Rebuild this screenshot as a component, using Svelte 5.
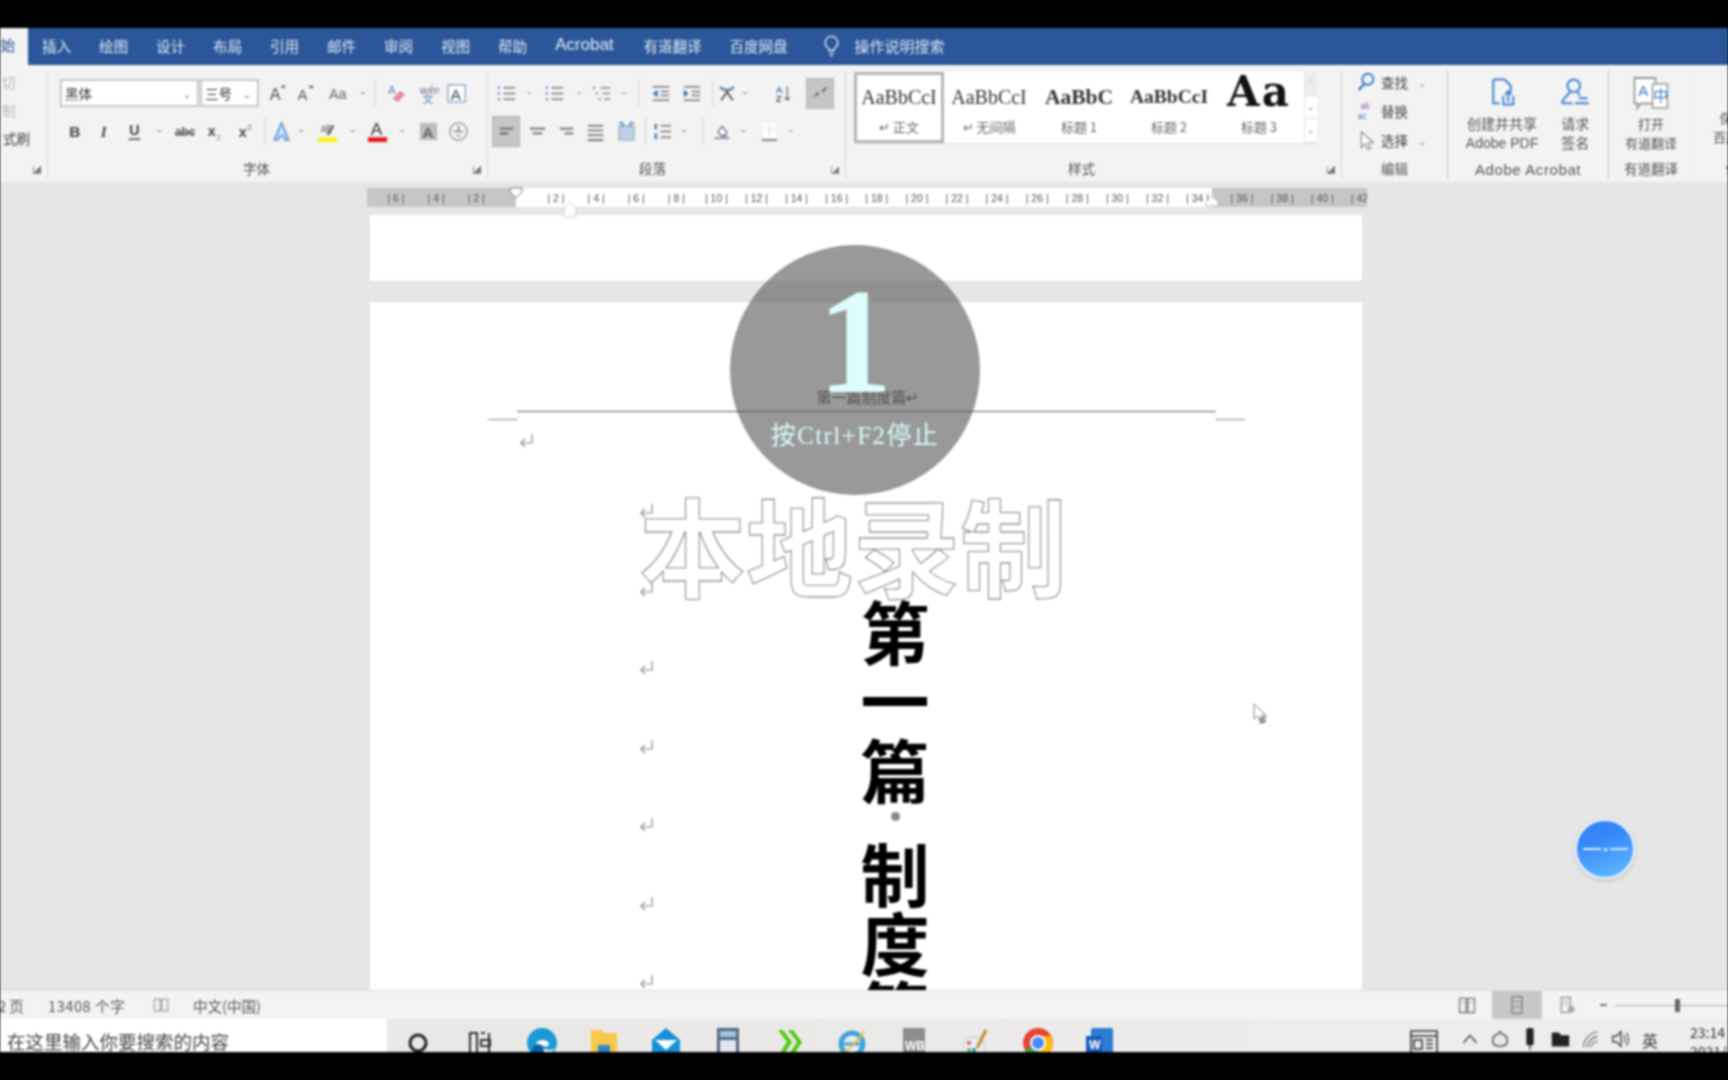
<script>
const tabs = ['插入', '绘图', '设计', '布局', '引用', '邮件', '审阅', '视图', '帮助', 'Acrobat', '有道翻译', '百度网盘'];

const paths = {
  chev: '<path d="M9 10.5l3 3 3-3" fill="none" stroke="#777" stroke-width="1.5"/>',
  grow: '<text x="5" y="19" font-size="17" font-family="Liberation Sans" fill="#555">A</text><path d="M17 6l2-2 2 2" fill="none" stroke="#444" stroke-width="1.4"/>',
  shrink: '<text x="5" y="19" font-size="15" font-family="Liberation Sans" fill="#555">A</text><path d="M17 4l2 2 2-2" fill="none" stroke="#444" stroke-width="1.4"/>',
  case: '<text x="3" y="18" font-size="15" font-family="Liberation Sans" fill="#666">Aa</text>',
  eraser: '<text x="3" y="13" font-size="12" font-family="Liberation Sans" fill="#5a86c0">A</text><path d="M8 17l8-8 5 4-8 8z" fill="#e58b9c"/>',
  wen: '<text x="4" y="13" font-size="11" font-family="Noto Sans CJK SC" fill="#667">wén</text><text x="7" y="22" font-size="11" font-family="Noto Sans CJK SC" fill="#3a76b8">文</text>',
  abox: '<rect x="3" y="3" width="18" height="18" fill="#fff" stroke="#7fa3cc" stroke-width="1.4"/><text x="6" y="19" font-size="16" font-family="Liberation Sans" fill="#444">A</text>',
  bold: '<text x="6.5" y="18" font-size="16" font-weight="700" font-family="Liberation Sans" fill="#444">B</text>',
  ital: '<text x="8" y="18" font-size="16" font-style="italic" font-weight="700" font-family="Liberation Serif" fill="#444">I</text>',
  under: '<text x="6.5" y="16" font-size="15" font-weight="700" font-family="Liberation Sans" fill="#444">U</text><path d="M6 20h12" stroke="#444" stroke-width="1.6"/>',
  abc: '<text x="2" y="17" font-size="12.5" font-weight="700" font-family="Liberation Sans" fill="#555">abc</text><path d="M2 13.5h20" stroke="#555" stroke-width="1.2"/>',
  sub: '<text x="5" y="17" font-size="15" font-weight="700" font-family="Liberation Sans" fill="#444">x</text><text x="14" y="21" font-size="8" font-family="Liberation Sans" fill="#5a86c0">2</text>',
  sup: '<text x="5" y="18" font-size="15" font-weight="700" font-family="Liberation Sans" fill="#444">x</text><text x="14" y="10" font-size="8" font-family="Liberation Sans" fill="#555">2</text>',
  effect: '<path d="M12 3l7.5 18h-4l-1.4-4H9.9l-1.4 4h-4z" fill="#cfe2f6" stroke="#4b8fd6" stroke-width="1.5"/>',
  marker: '<text x="5" y="13" font-size="11" font-family="Liberation Sans" fill="#555">ab</text><path d="M11 15l6-10 2 1-5 10z" fill="#666"/><rect x="2" y="18" width="20" height="5" fill="#ffef1e"/>',
  red: '<text x="5" y="16" font-size="18" font-family="Liberation Sans" fill="#333">A</text><rect x="2" y="18" width="20" height="5" fill="#e8141c"/>',
  ashade: '<rect x="3" y="3" width="18" height="18" fill="#bdbdbd"/><text x="6" y="19" font-size="16" font-family="Liberation Sans" fill="#444">A</text>',
  circ: '<circle cx="12" cy="12" r="9" fill="none" stroke="#888" stroke-width="1.2"/><path d="M7 12h10M12 6v6" stroke="#666" stroke-width="1.3"/><path d="M9.5 15l2.5 2 2.5-2" fill="none" stroke="#666"/>',
  bullets: '<path d="M9 6h12M9 12h12M9 18h12" stroke="#777" stroke-width="1.5"/><path d="M4 5v2M4 11v2M4 17v2" stroke="#3a76b8" stroke-width="2"/>',
  multi: '<path d="M11 6h10M13 12h8M15 18h6" stroke="#888" stroke-width="1.4"/><path d="M4 5v2M7 11v2M10 17v2" stroke="#3a76b8" stroke-width="1.8"/>',
  outdent: '<path d="M4 5h17M12 10h9M12 14h9M4 19h17" stroke="#777" stroke-width="1.6"/><path d="M9 8v8l-5-4z" fill="#2f6fb2"/>',
  indent: '<path d="M4 5h17M12 10h9M12 14h9M4 19h17" stroke="#777" stroke-width="1.6"/><path d="M4 8v8l5-4z" fill="#2f6fb2"/>',
  cross: '<path d="M5 20L15 6M19 20L9 6" stroke="#555" stroke-width="2.2"/><path d="M4 4l4 4M20 4l-4 4" stroke="#3a76b8" stroke-width="2.6"/>',
  sort: '<text x="5" y="11" font-size="10" font-weight="700" font-family="Liberation Sans" fill="#3a76b8">A</text><text x="5" y="21" font-size="10" font-weight="700" font-family="Liberation Sans" fill="#555">Z</text><path d="M17 5v14M14 16l3 3 3-3" fill="none" stroke="#666" stroke-width="1.3"/>',
  marks: '<path d="M7 14l3-3M14 10l3-3" stroke="#555" stroke-width="2"/><path d="M4 15h3M16 6h4" stroke="#777"/>',
  left: '<path d="M5 9h14M5 14h9" stroke="#666" stroke-width="2"/>',
  center: '<path d="M4 9h16M7 14h10" stroke="#666" stroke-width="1.8"/>',
  right: '<path d="M5 9h14M10 14h9" stroke="#666" stroke-width="1.8"/>',
  just: '<path d="M4 6h16M4 11h16M4 16h16M4 21h16" stroke="#666" stroke-width="1.6"/>',
  dist: '<rect x="4" y="6" width="16" height="15" fill="#bcd0e6" stroke="#8aa" /><path d="M4 3h4v4M20 3h-4v4" stroke="#3a76b8" stroke-width="1.5" fill="none"/>',
  spacing: '<path d="M10 6h11M10 12h11M10 18h11" stroke="#777" stroke-width="1.5"/><path d="M5 4v6M5 14v6" stroke="#2f6fb2" stroke-width="2.2"/>',
  fill: '<path d="M7 13l5-7 6 7-5 5z" fill="#fff" stroke="#666" stroke-width="1.4"/><path d="M3 20h18" stroke="#888" stroke-width="2"/><path d="M10 17h8" stroke="#3a76b8" stroke-width="1.6"/>',
  border: '<rect x="5" y="3" width="14" height="15" fill="#fff"/><path d="M12 3v15M5 10h14" stroke="#ddd"/><path d="M4 21h16" stroke="#666" stroke-width="1.6"/>',
  find: '<circle cx="14" cy="9" r="6" fill="none" stroke="#2f78c4" stroke-width="2"/><path d="M10 14l-6 7" stroke="#2f78c4" stroke-width="2.4"/>',
  replace: '<text x="6" y="10" font-size="9" font-family="Liberation Sans" fill="#8b5ca8">ab</text><text x="3" y="21" font-size="9" font-family="Liberation Sans" fill="#3a76b8">ac</text>',
  select: '<path d="M7 3v17l4-4 3 6 3-1-3-6h6z" fill="#fff" stroke="#888" stroke-width="1.3"/>',
  pdf: '<path d="M5 2h9l5 5v5M5 2v19h5" fill="none" stroke="#3f82d6" stroke-width="1.6"/><path d="M13 15v7h8v-7M17 20v-8M14.5 14l2.5-2.5 2.5 2.5" fill="none" stroke="#3f82d6" stroke-width="1.5"/>',
  sign: '<circle cx="11" cy="7" r="5" fill="none" stroke="#3f82d6" stroke-width="1.6"/><path d="M8 12l-6 7v2h8M14 12l2 3" fill="none" stroke="#3f82d6" stroke-width="1.6"/><path d="M12 21h11M15 17h7" stroke="#3f82d6" stroke-width="1.6"/>',
  trans: '<path d="M1 2h14v17H5l-2 3v-3H1z" fill="#fff" stroke="#999" stroke-width="1.2"/><path d="M13 6h10v16H13z" fill="#fff" stroke="#999" stroke-width="1"/><text x="3.5" y="14" font-size="10" font-family="Liberation Sans" fill="#2f78c4">A</text><text x="13.5" y="17" font-size="10" font-family="Noto Sans CJK SC" fill="#2f78c4">中</text>',
  baidu: '<circle cx="16" cy="12" r="10" fill="#3db2e8"/>',
  ret: '<path d="M15 4v9H4M8 9l-4 4 4 4" fill="none" stroke="#888" stroke-width="1.2"/>',
  book: '<path d="M3 4h8v16H3zM13 4h8v16h-8z" fill="none" stroke="#888" stroke-width="1.3"/>',
  read: '<path d="M3 4h8v17H3zM13 4h8v17h-8z" fill="none" stroke="#777" stroke-width="1.6"/><path d="M5 9h4M15 9h4" stroke="#999"/>',
  print: '<rect x="6" y="2" width="12" height="20" fill="none" stroke="#777" stroke-width="1.4"/><path d="M6 8h12M6 14h12" stroke="#777"/>',
  web: '<rect x="5" y="3" width="11" height="18" fill="none" stroke="#888" stroke-width="1.4"/><path d="M7 7h7M7 11h7" stroke="#999"/><circle cx="17" cy="17" r="4" fill="#aaa"/>',
  bulb: '<path d="M12 2.5a6.5 6.5 0 0 0-4 11.6c.8.7 1.2 1.6 1.2 2.9h5.6c0-1.3.4-2.2 1.2-2.9A6.5 6.5 0 0 0 12 2.5zM9.5 20h5M10.5 22.5h3" fill="none" stroke="#e4ecf8" stroke-width="1.4"/>',
  caret: '<path d="M5 16l7-8 7 8" fill="none" stroke="#444" stroke-width="1.6"/>',
  cloud: '<path d="M12 4l3 3c3 1 5 4 5 7 0 4-3 6-8 6s-8-2-8-6c0-3 2-6 5-7z" fill="#e8e8e8" stroke="#444" stroke-width="1.5"/>',
  mic: '<rect x="8" y="0" width="8" height="19" rx="2" fill="#222"/><path d="M12 19v5" stroke="#555" stroke-width="1.6"/>',
  net: '<path d="M3 5h8l2 3h9v12H3z" fill="#222"/><path d="M3 20h19" stroke="#777" stroke-width="1.4"/>',
  wifi: '<path d="M5 21C5 13 11 6 20 4M9 21c0-5 4-10 11-12M13 21c0-3 3-6 7-7" fill="none" stroke="#777" stroke-width="1.5"/>',
  vol: '<path d="M4 9h4l5-5v16l-5-5H4z" fill="none" stroke="#444" stroke-width="1.5"/><path d="M16 8c2 2 2 6 0 8M19 5c3 4 3 10 0 14" fill="none" stroke="#555" stroke-width="1.4"/>'
};

const fontRow1 = [
  { i: 'grow', w: 28 }, { i: 'shrink', w: 29 }, { i: 'case', w: 36 }, { i: 'chev', w: 16 }, { sep: 1, w: 8 },
  { i: 'eraser', w: 34 }, { i: 'wen', w: 28 }, { i: 'abox', w: 30 }
];
const fontRow2 = [
  { i: 'bold', w: 28 }, { i: 'ital', w: 32 }, { i: 'under', w: 28 }, { i: 'chev', w: 22 }, { i: 'abc', w: 28 },
  { i: 'sub', w: 33 }, { i: 'sup', w: 28 }, { sep: 1, w: 10 }, { i: 'effect', w: 24 }, { i: 'chev', w: 16 },
  { i: 'marker', w: 36 }, { i: 'chev', w: 16 }, { i: 'red', w: 33 }, { i: 'chev', w: 16 }, { i: 'ashade', w: 36 }, { i: 'circ', w: 24 }
];
const paraRow1 = [
  { w: 2 }, { i: 'bullets', w: 32 }, { i: 'chev', w: 14 }, { i: 'bullets', w: 36 }, { i: 'chev', w: 14 }, { i: 'multi', w: 31 }, { i: 'chev', w: 14 },
  { sep: 1, w: 14 }, { i: 'outdent', w: 30 }, { i: 'indent', w: 32 }, { sep: 1, w: 10 }, { i: 'cross', w: 20 }, { i: 'chev', w: 16 },
  { w: 14 }, { i: 'sort', w: 30 }, { w: 9 }, { i: 'marks', w: 28, on: 1 }
];
const paraRow2 = [
  { w: 4 }, { i: 'left', w: 28, on: 1 }, { i: 'center', w: 34 }, { i: 'right', w: 24 }, { i: 'just', w: 34 }, { i: 'dist', w: 28 },
  { sep: 1, w: 10 }, { i: 'spacing', w: 24 }, { i: 'chev', w: 20 }, { sep: 1, w: 18 }, { i: 'fill', w: 20 }, { i: 'chev', w: 22 }, { i: 'border', w: 30 }, { i: 'chev', w: 14 }
];

const styles = [
  { s: 'AaBbCcI', l: '↵ 正文', c: 'normal' },
  { s: 'AaBbCcI', l: '↵ 无间隔', c: 'normal' },
  { s: 'AaBbC', l: '标题 1', c: 'h1' },
  { s: 'AaBbCcI', l: '标题 2', c: 'h2' },
  { s: 'Aa', l: '标题 3', c: 'h3' }
];

const edits = [
  { i: 'find', t: '查找', chev: true },
  { i: 'replace', t: '替换' },
  { i: 'select', t: '选择', chev: true }
];

const rulerLeft = [6, 4, 2];
const rulerMid = [2, 4, 6, 8, 10, 12, 14, 16, 18, 20, 22, 24, 26, 28, 30, 32, 34];
const rulerRight = [36, 38, 40, 42];

const returns = [0, 1, 2, 3, 4, 5, 6];
const tray = ['caret', 'cloud', 'mic', 'net', 'wifi', 'vol'];
</script>

{#snippet icon(name, size = 24)}
  <svg width={size} height={size} viewBox="0 0 24 24">{@html paths[name]}</svg>
{/snippet}

{#snippet tools(items)}
  {#each items as t}
    {#if t.sep}
      <span class="cell" style:width="{t.w}px"><i class="vsep"></i></span>
    {:else if t.i}
      <span class="cell" class:on={t.on} style:width="{t.w}px">{@render icon(t.i, t.i === 'chev' ? 16 : 23)}</span>
    {:else}
      <span class="cell" style:width="{t.w}px"></span>
    {/if}
  {/each}
{/snippet}

<div class="app">
  <div class="bar-black top"></div>

  <nav class="tabs">
    <span class="tab-home">始</span>
    {#each tabs as t}<span class="tab" class:latin={t === 'Acrobat'}>{t}</span>{/each}
    <span class="bulb">{@render icon('bulb', 23)}</span>
    <span class="tell">操作说明搜索</span>
  </nav>

  <section class="ribbon">
    <div class="group clip">
      <div class="clip-list">
        <span>切</span><span>制</span><strong>式刷</strong>
      </div>
      <div class="label"><em class="launch"></em></div>
    </div>

    <div class="group font">
      <div class="row">
        <span class="select name">黑体<b>⌄</b></span>
        <span class="select size">三号<b>⌄</b></span>
        <span class="cell" style:width="3px"></span>
        {@render tools(fontRow1)}
      </div>
      <div class="row">{@render tools(fontRow2)}</div>
      <div class="label font-label">字体<em class="launch"></em></div>
    </div>

    <div class="group para">
      <div class="row">{@render tools(paraRow1)}</div>
      <div class="row">{@render tools(paraRow2)}</div>
      <div class="label para-label">段落<em class="launch"></em></div>
    </div>

    <div class="group gallery-group">
      <div class="gallery">
        {#each styles as s, i}
          <div class="style" class:picked={i === 0}>
            <span class="sample {s.c}">{s.s}</span>
            <span class="style-name">{s.l}</span>
          </div>
        {/each}
        <div class="scroller"><span>⌃</span><span>⌄</span><span>⌄</span></div>
      </div>
      <div class="label gallery-label">样式<em class="launch"></em></div>
    </div>

    <div class="group edit">
      <div class="edit-list">
        {#each edits as e}
          <div class="edit-row">{@render icon(e.i, 22)}<span>{e.t}</span>{#if e.chev}<b>⌄</b>{/if}</div>
        {/each}
      </div>
      <div class="label">编辑</div>
    </div>

    <div class="group acrobat">
      <div class="big-row">
        <div class="big">{@render icon('pdf', 30)}<span>创建并共享<br />Adobe PDF</span></div>
        <div class="big">{@render icon('sign', 30)}<span>请求<br />签名</span></div>
      </div>
      <div class="label wide">Adobe Acrobat</div>
    </div>

    <div class="group youdao">
      <div class="big-row">
        <div class="big">{@render icon('trans', 36)}<span>打开<br />有道翻译</span></div>
      </div>
      <div class="label">有道翻译</div>
    </div>

    <div class="group baidu">
      <div class="big-row">
        <div class="big">{@render icon('baidu', 30)}<span>保存到<br />百度网盘</span></div>
      </div>
      <div class="label">保存</div>
    </div>
  </section>

  <main class="workspace">
    <div class="ruler">
      <div class="seg dark left-seg">{#each rulerLeft as n}<span>| {n} |</span>{/each}</div>
      <div class="seg mid-seg">{#each rulerMid as n}<span>| {n} |</span>{/each}</div>
      <div class="seg dark right-seg">{#each rulerRight as n}<span>| {n} |</span>{/each}</div>
      <svg class="marker-top" width="14" height="12" viewBox="0 0 14 12"><path d="M1 1h12v4l-6 6-6-6z" fill="#fff" stroke="#777" /></svg>
      <svg class="marker-low" width="14" height="17" viewBox="0 0 14 17"><path d="M7 1l6 6v9H1V7z" fill="#fff" stroke="#ccc" /></svg>
      <svg class="marker-right" width="14" height="12" viewBox="0 0 14 12"><path d="M7 1l6 6v4H1V7z" fill="#fff" stroke="#bbb" /></svg>
    </div>

    <div class="page page-end"></div>
    <div class="page page-now">
      <div class="head-zone">
        <div class="head-text">第一篇制度篇↵</div>
        <div class="head-line">
          <i></i><b></b><i></i>
        </div>
      </div>
      <div class="ret first">{@render icon('ret', 24)}</div>

      <div class="stack">
        <div class="ret-col">
          {#each returns as r}<div class="ret">{@render icon('ret', 24)}</div>{/each}
        </div>
        <h1 class="outline">本地录制</h1>
        <div class="vertical">
          <span>第</span><span>一</span><span>篇</span>
          <i class="dot"></i>
          <span>制</span><span>度</span><span>篇</span>
        </div>
      </div>
    </div>

    <div class="countdown">
      <span class="digit">1</span>
      <span class="hint">按Ctrl+F2停止</span>
    </div>
    <div class="float-btn"><i></i><u></u><i></i></div>
    <svg class="cursor" width="16" height="22" viewBox="0 0 16 22">
      <path d="M2 1v15l4-3 3 6 3-1-3-6h5z" fill="#fff" stroke="#888" />
      <path d="M7 17l7-3M8 20l6-2" stroke="#555" stroke-width="1.5" />
    </svg>
  </main>

  <footer class="status">
    <span class="st page-no">2 页</span>
    <span class="st words">13408 个字</span>
    <span class="st-icon">{@render icon('book', 18)}</span>
    <span class="st lang">中文(中国)</span>
    <span class="views">
      <span class="view">{@render icon('read', 20)}</span>
      <span class="view active">{@render icon('print', 20)}</span>
      <span class="view">{@render icon('web', 20)}</span>
    </span>
    <span class="zoom">
      <span class="minus"></span>
      <span class="track"><i></i></span>
    </span>
  </footer>

  <div class="taskbar">
    <div class="search">在这里输入你要搜索的内容</div>
    <div class="apps">
      <span class="app-cell"><svg width="30" height="30" viewBox="0 0 30 30"><circle cx="15" cy="15" r="8" fill="none" stroke="#222" stroke-width="3" /></svg></span>
      <span class="app-cell"><svg width="30" height="30" viewBox="0 0 30 30"><path d="M5 5h7v20H5zM16 5h4M16 25h4M24 5v20M16 12h9v6h-9z" fill="none" stroke="#333" stroke-width="2" /></svg></span>
      <span class="app-cell"><svg width="30" height="30" viewBox="0 0 30 30"><circle cx="15" cy="15" r="15" fill="#1b9ad6" /><path d="M9 17c0-6 12-7 13-1 0 3-6 3-7 1 1 5 8 7 13 3-4 8-19 8-19-3z" fill="#fff" /><circle cx="11" cy="22" r="6" fill="#0c5fa8" /></svg></span>
      <span class="app-cell"><svg width="30" height="30" viewBox="0 0 30 30"><path d="M2 2h11l2 3h13v25H2z" fill="#f7c948" /><rect x="9" y="17" width="12" height="13" fill="#2f86c9" /></svg></span>
      <span class="app-cell"><svg width="30" height="30" viewBox="0 0 30 30"><path d="M15 0l14 12v18H1V12z" fill="#1590d6" /><path d="M4 12h22l-11 10z" fill="#fff" /></svg></span>
      <span class="app-cell"><svg width="30" height="30" viewBox="0 0 30 30"><rect x="4" width="22" height="30" fill="#556a80" /><rect x="7" y="3" width="16" height="6" fill="#9fc4e0" /><rect x="7" y="12" width="16" height="18" fill="#dfe6ec" /></svg></span>
      <span class="app-cell"><svg width="30" height="30" viewBox="0 0 30 30"><path d="M3 2l9 12-9 14h5l9-14L8 2zM13 2l9 12-9 14h5l9-14-9-12z" fill="#4ccb0e" /></svg></span>
      <span class="app-cell"><svg width="30" height="30" viewBox="0 0 30 30"><circle cx="15" cy="16" r="11" fill="none" stroke="#3fa3dd" stroke-width="5" /><path d="M6 16h18" stroke="#3fa3dd" stroke-width="3" /><path d="M3 26C8 26 24 10 27 3" fill="none" stroke="#f1c232" stroke-width="2" /></svg></span>
      <span class="app-cell"><svg width="30" height="30" viewBox="0 0 30 30"><path d="M4 0h22v30H4z" fill="#8d8d8d" /><text x="6" y="22" font-size="12" font-weight="700" fill="#fff" font-family="Liberation Sans">WB</text></svg></span>
      <span class="app-cell"><svg width="30" height="30" viewBox="0 0 30 30"><ellipse cx="13" cy="19" rx="11" ry="10" fill="#e8eef2" stroke="#bcc" /><circle cx="8" cy="15" r="2" fill="#e55" /><circle cx="13" cy="22" r="2" fill="#3a76d8" /><circle cx="8" cy="22" r="2" fill="#4b4" /><path d="M16 20L25 2" stroke="#c98a2a" stroke-width="3" /></svg></span>
      <span class="app-cell"><svg width="30" height="30" viewBox="0 0 30 30"><circle cx="15" cy="15" r="15" fill="#e54335" /><path d="M15 15L2 22a15 15 0 0 0 15 8z" fill="#34a853" /><path d="M15 8h13a15 15 0 0 1-11 22z" fill="#fbbc05" /><circle cx="15" cy="15" r="7" fill="#4a8af4" stroke="#fff" stroke-width="2" /></svg></span>
      <span class="app-cell"><svg width="30" height="30" viewBox="0 0 30 30"><rect x="6" y="0" width="22" height="30" rx="2" fill="#2b7cd3" /><rect x="1" y="8" width="16" height="16" fill="#185abd" /><text x="4" y="21" font-size="12" font-weight="700" fill="#fff" font-family="Liberation Sans">W</text></svg></span>
    </div>
    <div class="tray">
      <span class="news"><svg width="30" height="26" viewBox="0 0 30 26"><path d="M2 3h26v22H2zM2 8h26M5 12h8v9H5zM17 12h7M17 16h7M17 20h7" fill="none" stroke="#333" stroke-width="1.6" /></svg></span>
      {#each tray as t}<span class="tray-cell">{@render icon(t, 22)}</span>{/each}
      <span class="tray-cell ime">英</span>
      <span class="clock">23:14<br />2021/8/9</span>
    </div>
  </div>

  <div class="bar-black bottom"></div>
</div>

<style>
  :global(body) {
    margin: 0;
    background: #000;
  }

  .app {
    width: 1728px;
    height: 1080px;
    display: flex;
    flex-direction: column;
    overflow: hidden;
    font-family: "Noto Sans CJK SC", "Liberation Sans", sans-serif;
    color: #444;
    filter: blur(0.8px);
  }

  .bar-black {
    background: #000;
    flex: none;
  }

  .top { height: 28px; }
  .bottom { flex: 1; }

  .tabs {
    height: 37px;
    box-sizing: border-box;
    padding-bottom: 3px;
    flex: none;
    background: #2b579a;
    display: flex;
    align-items: center;
    gap: 28px;
    color: #dbe5f3;
    font-size: 14.5px;
    white-space: nowrap;
  }

  .tab-home {
    flex: none;
    width: 28px;
    height: 37px;
    margin-bottom: -3px;
    line-height: 34px;
    box-sizing: border-box;
    padding-right: 13px;
    background: #f3f3f3;
    color: #2b579a;
    text-align: right;
    margin-right: -14px;
  }

  .tab.latin {
    font-family: "Liberation Sans", sans-serif;
    font-size: 17px;
    margin-right: 2px;
  }

  .bulb {
    display: flex;
    margin-left: 4px;
  }

  .tell {
    margin-left: -16px;
    font-size: 15px;
  }

  .ribbon {
    height: 117px;
    flex: none;
    background: #f3f3f3;
    display: flex;
    overflow: hidden;
  }

  .group {
    flex: none;
    display: flex;
    flex-direction: column;
    position: relative;
    border-right: 1px solid #d8d8d8;
    box-sizing: border-box;
    margin: 5px 0 3px;
  }

  .clip { width: 48px; }
  .font { width: 440px; padding: 9px 0 0 12px; }
  .para { width: 358px; padding: 9px 0 0 0; }
  .gallery-group { width: 496px; padding: 2px 0 0 8px; }
  .edit { width: 106px; border-right-color: #c4c4c4; }
  .acrobat { width: 161px; border-right-color: #c4c4c4; }
  .youdao { width: 85px; border-right-color: #ececec; }
  .baidu { width: 90px; border: 0; }

  .row {
    display: flex;
    height: 28px;
    margin-bottom: 10px;
    align-items: center;
  }

  .cell {
    flex: none;
    height: 28px;
    display: flex;
    align-items: center;
    justify-content: center;
  }

  .cell.on {
    background: #c6c6c6;
    outline: 1px solid #b4b4b4;
    outline-offset: -1px;
    height: 31px;
  }

  .vsep {
    width: 1px;
    height: 28px;
    background: #d4d4d4;
  }

  .select {
    box-sizing: border-box;
    height: 28px;
    display: flex;
    align-items: center;
    justify-content: space-between;
    background: #fff;
    border: 2px solid #c6c6c6;
    padding: 0 3px;
    font-size: 13.5px;
    color: #333;
  }

  .select b {
    font-weight: 400;
    font-size: 10px;
    color: #777;
    padding-right: 3px;
  }

  .name { width: 139px; }
  .size { width: 59px; margin-left: 1px; }

  .label {
    margin-top: auto;
    height: 24px;
    line-height: 27px;
    text-align: center;
    font-size: 13.5px;
    color: #555;
    position: relative;
  }

  .font-label { padding-right: 34px; }
  .para-label { padding-right: 28px; }
  .gallery-label { padding-right: 32px; }

  .label.wide {
    font-family: "Liberation Sans", sans-serif;
    font-size: 15px;
    line-height: 29px;
    letter-spacing: 0.6px;
  }

  .launch {
    position: absolute;
    right: 6px;
    bottom: 5px;
    width: 7px;
    height: 7px;
    border: 1px solid #999;
    border-width: 0 0 1px 1px;
    background: linear-gradient(135deg, transparent 50%, #777 50%);
  }

  .clip-list {
    display: flex;
    flex-direction: column;
    font-size: 13.5px;
    color: #bbb;
    gap: 10px;
    padding-top: 3px;
  }

  .clip-list span { line-height: 18px; padding-left: 2px; }

  .clip-list strong {
    font-weight: 400;
    color: #444;
    line-height: 18px;
    margin-left: 3px;
    white-space: nowrap;
  }

  .gallery {
    display: flex;
    width: 463px;
    height: 71px;
    background: #fff;
    box-shadow: 0 1px 0 #ddd;
  }

  .style {
    flex: none;
    width: 90px;
    box-sizing: border-box;
    display: flex;
    flex-direction: column;
    align-items: center;
    overflow: hidden;
    padding-top: 3px;
  }

  .style.picked {
    border: 3px solid #b5b5b5;
    padding-top: 0;
  }

  .sample {
    height: 44px;
    line-height: 44px;
    font-family: "Liberation Serif", serif;
    font-size: 20px;
    color: #333;
    white-space: nowrap;
  }

  .sample.h1 { font-size: 21.5px; font-weight: 700; }
  .sample.h2 { font-size: 19.5px; font-weight: 700; }

  .sample.h3 {
    font-family: "DejaVu Serif", serif;
    font-size: 42px;
    font-weight: 700;
    color: #111;
    line-height: 34px;
    height: 44px;
    letter-spacing: 2px;
  }

  .style-name {
    font-size: 13px;
    color: #666;
    line-height: 16px;
  }

  .scroller {
    flex: 1;
    display: flex;
    flex-direction: column;
    border-left: 1px solid #e4e4e4;
    font-size: 9px;
    color: #777;
  }

  .scroller span {
    flex: 1;
    text-align: center;
    line-height: 22px;
    border-bottom: 1px solid #ddd;
  }

  .scroller span:first-child { background: #ececec; color: #bbb; }

  .edit-list {
    display: flex;
    flex-direction: column;
    padding: 0 0 0 13px;
    gap: 5px;
  }

  .edit-row {
    display: flex;
    align-items: center;
    height: 24px;
    gap: 4px;
    font-size: 13.5px;
    color: #444;
  }

  .edit-row b {
    font-weight: 400;
    font-size: 10px;
    color: #888;
    margin-left: 6px;
  }

  .big-row {
    display: flex;
    padding-top: 5px;
    justify-content: center;
    gap: 22px;
  }

  .big {
    display: flex;
    flex-direction: column;
    align-items: center;
    gap: 3px;
    font-size: 13px;
    line-height: 19px;
    text-align: center;
    color: #555;
    white-space: nowrap;
  }

  .acrobat .big-row { padding-top: 7px; }
  .acrobat .big { gap: 8px; }
  .acrobat .big span { font-family: "Liberation Sans", "Noto Sans CJK SC", sans-serif; font-size: 14px; }

  .workspace {
    flex: none;
    height: 808px;
    background: #e6e6e6;
    position: relative;
    display: flex;
    flex-direction: column;
    overflow: hidden;
  }

  .ruler {
    position: relative;
    display: flex;
    width: 1000px;
    height: 19px;
    margin: 6px 0 0 367px;
    font-family: "Liberation Sans", sans-serif;
    font-size: 10.5px;
    color: #555;
    flex: none;
  }

  .seg {
    height: 19px;
    display: flex;
    box-sizing: border-box;
    overflow: hidden;
    background: #fff;
    align-items: center;
  }

  .seg span {
    flex: none;
    width: 40.1px;
    text-align: center;
    white-space: nowrap;
  }

  .seg.dark { background: #c6c6c6; }
  .left-seg { width: 149px; padding-left: 9px; }
  .mid-seg { width: 696px; padding-left: 20px; }
  .right-seg { width: 155px; padding-left: 10px; }

  .marker-top { position: absolute; left: 142px; top: -1px; }
  .marker-low { position: absolute; left: 196px; top: 13px; }
  .marker-right { position: absolute; left: 838px; top: 7px; }

  .page {
    flex: none;
    width: 992px;
    margin-left: 370px;
    background: #fff;
  }

  .page-end {
    height: 66px;
    margin-top: 8px;
    border-bottom: 1px solid #dadada;
  }

  .page-now {
    margin-top: 19px;
    flex: 1;
    border-top: 1px solid #dadada;
    overflow: hidden;
    box-sizing: border-box;
  }

  .head-zone {
    padding-top: 86px;
  }

  .head-text {
    text-align: center;
    font-size: 15px;
    line-height: 18px;
    color: #444;
    margin-left: 4px;
  }

  .head-line {
    display: flex;
    margin: 5px 0 0 118px;
    height: 10px;
  }

  .head-line i {
    width: 29px;
    height: 8px;
    border-bottom: 1px solid #888;
  }

  .head-line b {
    width: 697px;
    border-top: 1px solid #555;
    border-left: 1px solid #eee;
    border-right: 1px solid #eee;
    margin-top: 0;
  }

  .ret {
    height: 24px;
    display: flex;
  }

  .ret.first {
    margin: 9px 0 0 147px;
  }

  .stack {
    display: grid;
    margin-top: -4px;
  }

  .stack > * {
    grid-area: 1 / 1;
  }

  .ret-col {
    display: flex;
    flex-direction: column;
    gap: 54.5px;
    padding: 50px 0 0 267px;
  }

  .outline {
    margin: 29px 0 0;
    padding: 0 0 0 269px;
    font-size: 107px;
    line-height: 128px;
    height: 128px;
    font-weight: 700;
    white-space: nowrap;
    color: #fff;
    -webkit-text-stroke: 0.8px #666;
  }

  .vertical {
    display: flex;
    flex-direction: column;
    align-items: center;
    width: 70px;
    margin: 146px 0 0 490px;
    font-size: 69px;
    font-weight: 700;
    line-height: 69px;
    color: #000;
  }

  .dot {
    width: 9px;
    height: 9px;
    margin: 9px 0 17px;
    border-radius: 50%;
    background: #888;
  }

  .countdown {
    position: absolute;
    left: 730px;
    top: 63px;
    width: 250px;
    height: 250px;
    border-radius: 50%;
    background: rgba(90, 90, 90, 0.62);
    display: flex;
    flex-direction: column;
    align-items: center;
    font-family: "Liberation Serif", "Noto Sans CJK SC", serif;
    color: #dcfdfd;
  }

  .digit {
    font-size: 150px;
    font-weight: 700;
    line-height: 150px;
    height: 150px;
    margin-top: 21px;
  }

  .hint {
    margin-top: 5px;
    font-size: 25px;
    line-height: 30px;
    letter-spacing: 1.4px;
    white-space: nowrap;
  }

  .float-btn {
    position: absolute;
    left: 1575px;
    top: 637px;
    width: 60px;
    height: 60px;
    box-sizing: border-box;
    border-radius: 50%;
    border: 2px solid #e6f4ff;
    background: linear-gradient(160deg, #3585f8 30%, #5bb6fd 90%);
    box-shadow: 0 2px 5px rgba(0, 0, 0, 0.15);
    display: flex;
    align-items: center;
    justify-content: center;
    gap: 3px;
  }

  .float-btn i {
    width: 18px;
    height: 2px;
    background: #d8ecff;
  }

  .float-btn u {
    width: 3px;
    height: 3px;
    background: #d8ecff;
  }

  .cursor {
    position: absolute;
    left: 1252px;
    top: 521px;
  }

  .status {
    height: 29px;
    flex: none;
    box-sizing: border-box;
    border-top: 1px solid #dedede;
    background: #f3f3f3;
    display: flex;
    align-items: center;
    font-size: 14.5px;
    color: #555;
    overflow: hidden;
  }

  .status > * { flex: none; }

  .page-no { margin-left: -2px; width: 26px; white-space: nowrap; }
  .words { margin-left: 24px; width: 80px; white-space: nowrap; letter-spacing: 0.6px; }
  .st-icon { display: flex; margin-left: 24px; }
  .lang { margin-left: 23px; width: 69px; white-space: nowrap; }

  .views {
    display: flex;
    margin-left: 1180px;
    align-items: center;
  }

  .view {
    width: 50px;
    height: 28px;
    display: flex;
    align-items: center;
    justify-content: center;
  }

  .view.active { background: #c8c8c8; }

  .zoom {
    display: flex;
    align-items: center;
    margin-left: 8px;
  }

  .minus {
    width: 7px;
    height: 2px;
    background: #777;
  }

  .track {
    position: relative;
    display: block;
    width: 130px;
    height: 1px;
    margin-left: 8px;
    background: #aaa;
  }

  .track i {
    position: absolute;
    left: 60px;
    top: -6px;
    width: 5px;
    height: 13px;
    background: #666;
  }

  .taskbar {
    height: 33px;
    flex: none;
    display: flex;
    background: linear-gradient(90deg, #e9e6e4, #eeeeee);
    overflow: hidden;
  }

  .search {
    width: 387px;
    flex: none;
    box-sizing: border-box;
    background: #fff;
    padding: 7px 0 0 7px;
    font-size: 18.5px;
    line-height: 30px;
    color: #444;
    white-space: nowrap;
  }

  .apps {
    display: flex;
    flex: none;
    padding-top: 9px;
  }

  .app-cell {
    width: 62px;
    display: flex;
    justify-content: center;
  }

  .tray {
    margin-left: 278px;
    flex: none;
    display: flex;
    padding-top: 9px;
  }

  .news {
    width: 30px;
    margin-right: 16px;
  }

  .tray-cell {
    width: 30px;
    display: flex;
    justify-content: center;
    font-size: 16px;
    line-height: 24px;
    color: #333;
  }

  .clock {
    width: 63px;
    margin: -5px 0 0 0;
    padding-left: 25px;
    font-size: 14px;
    line-height: 19px;
    color: #333;
    white-space: nowrap;
  }
</style>
